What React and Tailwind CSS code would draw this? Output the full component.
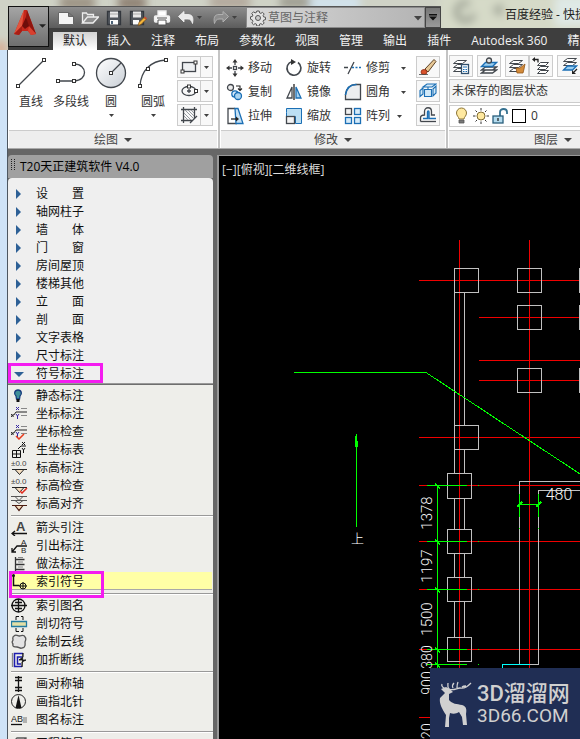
import React from "react";

/* ---------- small shared pieces ---------- */

function Icon({ w = 18, h = 18, children, className = "" }) {
  return (
    <svg
      width={w}
      height={h}
      viewBox={`0 0 ${w} ${h}`}
      fill="none"
      stroke="#42474d"
      strokeWidth="1.3"
      className={`shrink-0 ${className}`}
      aria-hidden="true"
    >
      {children}
    </svg>
  );
}

function Caret({ className = "text-[#404040]" }) {
  return (
    <svg width="5" height="3" viewBox="0 0 5 3" className={`shrink-0 ${className}`} aria-hidden="true">
      <path d="M0 0h5L2.500 3z" fill="currentColor" />
    </svg>
  );
}

function Node({ x, y }) {
  return <rect x={x - 1.5} y={y - 1.5} width="3" height="3" fill="#fff" stroke="#333" strokeWidth="1" />;
}

/* ---------- quick access bar ---------- */

const quick = [
  {
    label: "新建",
    art: <path d="M1.500 3.500h10l5 4v8h-15z M11.500 3.500v4h5" fill="#f4f4f4" stroke="#666" strokeWidth="1" />,
  },
  {
    label: "打开",
    art: (
      <>
        <path d="M1.500 14V4h4l1 1.500h6V8" stroke="#eee" fill="#8b8b8b" />
        <path d="M1.500 14l5-6h11L12 14z" fill="#8f8f8f" stroke="#eee" />
      </>
    ),
  },
  {
    label: "保存",
    art: (
      <>
        <path d="M2.500 2.500h13v13h-13z" fill="#50555c" stroke="#33373d" />
        <path d="M5 2.500h8v6H5z" fill="#e8e8e8" stroke="none" />
        <path d="M5 5h8" stroke="#aaa" strokeWidth="1" />
        <path d="M5 11h8v4.500H5z" fill="#fafafa" stroke="none" />
        <path d="M6 12h2v3H6z" fill="#4a6278" stroke="none" />
      </>
    ),
  },
  {
    label: "另存为",
    art: (
      <>
        <path d="M1.500 2.500h13v13h-13z" fill="#50555c" stroke="#33373d" />
        <path d="M4 2.500h8v6H4z" fill="#e8e8e8" stroke="none" />
        <path d="M4 5h8" stroke="#aaa" strokeWidth="1" />
        <path d="M4 11h6v4.500H4z" fill="#fafafa" stroke="none" />
        <path d="M9 16.500l1-3 5-5 2 2-5 5z" fill="#f2b43c" stroke="#7a4a14" strokeWidth=".7" />
        <path d="M15 8.500l2 2 1-1-2-2z" fill="#d8472c" stroke="none" />
      </>
    ),
  },
  {
    label: "打印",
    art: (
      <>
        <path d="M5 7V2h8v5" fill="#fff" stroke="#eee" />
        <rect x="1.500" y="7" width="15" height="6" rx="1" fill="#f6f6f6" stroke="#eee" />
        <path d="M5 11h8v5H5z" fill="#fff" stroke="#555" strokeWidth="1" />
        <path d="M4 9h10" stroke="#777" />
      </>
    ),
  },
  {
    label: "放弃",
    caret: true,
    art: <path d="M1.500 7.500L7 2.500V5.500h4c5 0 5.500 4 4.500 9-.8-2.500-2-4.500-4.500-4.500H7v3z" fill="#e9e9e9" stroke="#f5f5f5" strokeWidth=".8" />,
  },
  {
    label: "重做",
    caret: true,
    art: <path d="M16.500 7.500L11 2.500V5.500H7c-5 0-5.500 4-4.500 9 .8-2.500 2-4.500 4.500-4.500h4v3z" fill="#8d8d8d" stroke="#b0b0b0" strokeWidth="1" />,
  },
];

function QuickBar() {
  return (
    <div className="flex h-[22px] w-[392px] shrink-0 items-stretch border-t border-[#555] bg-gradient-to-b from-[#8d8d8d] to-[#5c5c5c]">
      <div className="flex w-[197px] items-center pl-2">
        {quick.map((q) => (
          <button key={q.label} type="button" aria-label={q.label} className="flex w-6 items-center last:ml-[11px]">
            <Icon w={18} h={18}>{q.art}</Icon>
            {q.caret && <Caret className="ml-[2px] text-[#404040]" />}
          </button>
        ))}
      </div>
      <label className="relative flex flex-1 items-center border border-[#8a8a8a] bg-gradient-to-r from-[#d8d8d8] to-[#b4b4b4]">
        <svg width="16" height="16" viewBox="0 0 16 16" className="ml-[3px] shrink-0" fill="none" stroke="#555" aria-hidden="true">
          <path
            d="M6.800 1h2.400l.4 1.900 1.300.5 1.600-1.100 1.700 1.700-1.100 1.600.5 1.300 1.900.4v2.400l-1.900.4-.5 1.300 1.100 1.600-1.700 1.700-1.600-1.100-1.300.5-.4 1.900H6.800l-.4-1.900-1.300-.5-1.600 1.100-1.700-1.700 1.100-1.600-.5-1.300L.5 9.200V6.800l1.900-.4.500-1.300L1.800 3.500l1.700-1.700 1.600 1.100 1.300-.5z"
            fill="#e4e4e4"
          />
          <circle cx="8" cy="8" r="2.500" fill="#ccc" />
        </svg>
        <select aria-label="工作空间" className="h-full flex-1 appearance-none bg-transparent pl-[2px] pt-px text-xs text-[#666] outline-none">
          <option>草图与注释</option>
        </select>
        <svg width="8" height="5" viewBox="0 0 8 5" className="absolute right-[2px] top-[8px]" aria-hidden="true">
          <path d="M0 0h8L4 4.500z" fill="#444" />
        </svg>
      </label>
      <button type="button" aria-label="自定义快速访问工具栏" className="flex w-4 items-center justify-center border border-[#444] bg-gradient-to-b from-[#777] to-[#9a9a9a]">
        <svg width="8" height="7" viewBox="0 0 8 7" aria-hidden="true">
          <path d="M0 0h8v1.500H0zM0 2.500h8L4 6.500z" fill="#111" />
        </svg>
      </button>
    </div>
  );
}

function Glass() {
  return (
    <svg className="absolute inset-0 h-full w-full" aria-hidden="true">
      <defs>
        <filter id="soft" x="-30%" y="-50%" width="160%" height="200%">
          <feGaussianBlur stdDeviation="4" />
        </filter>
      </defs>
      <rect width="100%" height="100%" fill="#cfd2c6" />
      <g filter="url(#soft)">
        <rect x="60" y="-4" width="35" height="14" fill="#9c9384" />
        <rect x="118" y="-4" width="28" height="14" fill="#8f8173" />
        <rect x="210" y="-4" width="40" height="12" fill="#b1a69a" />
        <rect x="280" y="-4" width="40" height="12" fill="#9d9b90" />
        <rect x="310" y="-4" width="50" height="14" fill="#d2e3ee" />
        <rect x="440" y="-8" width="160" height="44" fill="#d6dac8" />
        <path d="M470 4a9 9 0 1 0 4 10" fill="none" stroke="#8f9488" strokeWidth="5" />
        <path d="M492 10l10-7v14z" fill="#8f9488" />
        <rect x="555" y="-4" width="40" height="30" fill="#dfe9e6" />
        <rect x="-4" y="42" width="10" height="14" fill="#d9a88e" />
      </g>
    </svg>
  );
}

/* ---------- ribbon ---------- */

const tabs = ["默认", "插入", "注释", "布局", "参数化", "视图", "管理", "输出", "插件", "Autodesk 360", "精选应用"];

function Tabs() {
  return (
    <div role="tablist" className="flex h-[22px] items-end overflow-hidden bg-[#3e3e3e] pl-1">
      {tabs.map((t, i) => (
        <button
          key={t}
          type="button"
          role="tab"
          aria-selected={i === 0}
          className={
            i === 0
              ? "h-[18px] shrink-0 bg-gradient-to-b from-[#d2d2d2] to-white px-[10px] text-xs leading-[18px] text-[#222]"
              : "h-[18px] shrink-0 px-[10px] text-xs leading-[18px] text-[#f2f2f2]"
          }
        >
          {t}
        </button>
      ))}
    </div>
  );
}

function Panel({ title, width, children, last }) {
  return (
    <section className={`flex shrink-0 flex-col ${width} ${last ? "" : "border-r-2 border-[#c4c4c4]"}`}>
      <div className="h-[80px]">{children}</div>
      <button type="button" className="mx-px flex h-[18px] items-center justify-center gap-[6px] border-t border-[#ccc] bg-[#eee] pt-px text-xs text-[#444]">
        {title}
        <svg width="8" height="4" viewBox="0 0 8 4" aria-hidden="true">
          <path d="M0 0h8L4 4z" fill="#444" />
        </svg>
      </button>
    </section>
  );
}

const bigTools = [
  {
    label: "直线",
    width: "w-10",
    art: (
      <>
        <path d="M3 29L29 3" />
        <Node x={3} y={29} />
        <Node x={29} y={3} />
      </>
    ),
  },
  {
    label: "多段线",
    width: "w-10",
    art: (
      <>
        <path d="M3 24h16c14 0 14-17 0-17" />
        <Node x={3} y={24} />
        <Node x={19} y={24} />
        <Node x={19} y={7} />
      </>
    ),
  },
  {
    label: "圆",
    width: "w-10",
    caret: true,
    art: (
      <>
        <circle cx="16" cy="16" r="14.500" fill="url(#disc)" />
        <path d="M16 16L26 6" />
        <Node x={16} y={16} />
      </>
    ),
  },
  {
    label: "圆弧",
    width: "w-[44px]",
    caret: true,
    art: (
      <>
        <path d="M3 29C4 14 13 4 29 3" />
        <Node x={3} y={29} />
        <Node x={11} y={12} />
        <Node x={29} y={3} />
      </>
    ),
  },
];

const drawSplits = [
  {
    label: "矩形",
    art: (
      <>
        <rect x="2.500" y="4.500" width="13" height="9" fill="#eef0f2" />
        <Node x={2.5} y={13.5} />
        <Node x={15.5} y={4.5} />
      </>
    ),
  },
  {
    label: "椭圆",
    art: (
      <>
        <ellipse cx="9" cy="9" rx="7" ry="4.500" />
        <path d="M7 9h4M9 7v4" />
        <Node x={16} y={9} />
        <Node x={9} y={4.5} />
      </>
    ),
  },
  {
    label: "图案填充",
    art: (
      <>
        <path d="M1 3.500h16M1 14.500h11M3.500 1v16M14.500 1v11M17 10l-7 7" />
        <path d="M4 7l7 7M4 10l4 4M5 4l9 9M8 4l6 6M11 4l3 3" stroke="#8a9096" strokeWidth=".9" />
      </>
    ),
  },
];

function DrawPanel() {
  return (
    <Panel title="绘图" width="w-[212px]">
      <div className="flex h-full pl-[3px]">
        {bigTools.map((t) => (
          <button key={t.label} type="button" className={`flex flex-col items-center pt-[7px] text-xs text-[#333] ${t.width}`}>
            <Icon w={32} h={32}>
              <defs>
                <linearGradient id="disc" x1="0" y1="0" x2="1" y2="1">
                  <stop offset="0" stopColor="#fff" />
                  <stop offset="1" stopColor="#c9cfd6" />
                </linearGradient>
              </defs>
              {t.art}
            </Icon>
            <span className="mt-[5px] whitespace-nowrap">{t.label}</span>
            {t.caret && <Caret className="mt-1 text-[#404040]" />}
          </button>
        ))}
        <div className="ml-[2px] flex flex-col gap-[2px] pt-[6px]">
          {drawSplits.map((s) => (
            <button key={s.label} type="button" aria-label={s.label} className="flex h-[22px] w-9 items-center border border-[#ccc] bg-[#f8f8f8]">
              <span className="flex h-full w-[23px] items-center justify-center border-r border-[#ccc]">
                <Icon>{s.art}</Icon>
              </span>
              <span className="flex flex-1 justify-center">
                <Caret />
              </span>
            </button>
          ))}
        </div>
      </div>
    </Panel>
  );
}

const blue = "#1b6fb5";

const modifyColumns = [
  {
    pad: "w-[59px]",
    items: [
      {
        label: "移动",
        art: (
          <>
            <path d="M9 2v4M9 12v4M2 9h4M12 9h4" />
            <path d="M9 0l2.500 3.500h-5zM9 18l2.500-3.500h-5zM0 9l3.500-2.500v5zM18 9l-3.500-2.500v5z" fill="#333" stroke="none" />
            <rect x="7.500" y="7.500" width="3" height="3" />
          </>
        ),
      },
      {
        label: "复制",
        art: (
          <>
            <circle cx="4.500" cy="4.500" r="3" fill="#eee" />
            <path d="M10 3h4v4M12 5.500l2 2 2-2" stroke="#222" strokeWidth="1.100" />
            <circle cx="9" cy="11" r="3.200" fill="#d6eafa" stroke={blue} />
            <circle cx="12" cy="13" r="3.500" fill="#aad5f2" stroke={blue} />
          </>
        ),
      },
      {
        label: "拉伸",
        art: (
          <>
            <path d="M9 1.500H2v15h9" />
            <path d="M9 1.500l3 0 5 15H10z" fill="#c4e0f4" stroke={blue} />
            <path d="M5 12h6" stroke="#222" />
            <path d="M10 9.500l3 2.500-3 2.500z" fill="#222" stroke="none" />
          </>
        ),
      },
    ],
  },
  {
    pad: "w-[59px]",
    items: [
      {
        label: "旋转",
        art: (
          <>
            <path d="M7 2.500a7 7 0 1 0 6 1" strokeWidth="1.600" />
            <path d="M6 0l5 3-5 3z" fill="#333" stroke="none" />
          </>
        ),
      },
      {
        label: "镜像",
        art: (
          <>
            <path d="M7 4v11H2z" fill="#fff" />
            <path d="M11 4v11h5z" fill="#a6d1ef" stroke={blue} />
            <path d="M9 1v16" stroke="#222" />
          </>
        ),
      },
      {
        label: "缩放",
        art: (
          <>
            <path d="M1.500 5.500v-4h15v15h-6v-7h-9z" fill="#bcdff3" stroke={blue} strokeWidth="1" />
            <rect x="1.500" y="9.500" width="8" height="7" fill="#f3f3f3" />
          </>
        ),
      },
    ],
  },
  {
    pad: "w-[72px]",
    items: [
      {
        label: "修剪",
        caret: "ml-[11px] text-[#404040]",
        art: (
          <>
            <path d="M0 8.500h4M10 3L4 15" />
            <path d="M8 8.500h9" stroke={blue} strokeDasharray="2 1.500" />
          </>
        ),
      },
      {
        label: "圆角",
        caret: "ml-[11px] text-[#404040]",
        art: (
          <>
            <path d="M1.500 16.500V11c1-6 5-9.500 10-9.500h5v15z" fill="#eceef0" />
            <path d="M1.500 12c1-7 5-10.500 11-10.500" stroke={blue} strokeWidth="1.600" />
          </>
        ),
      },
      {
        label: "阵列",
        caret: "ml-[7px] text-[#404040]",
        art: (
          <>
            <rect x="1.500" y="1.500" width="6" height="6" fill="#f1f1f1" />
            <g fill="#d6ebf9" stroke={blue}>
              <rect x="10.500" y="1.500" width="6" height="6" />
              <rect x="1.500" y="10.500" width="6" height="6" />
              <rect x="10.500" y="10.500" width="6" height="6" />
            </g>
          </>
        ),
      },
    ],
  },
];

const modifyButtons = [
  {
    label: "删除",
    art: (
      <>
        <path d="M6 11L15 1.500l2 2L9 14z" fill="#e7c795" stroke="#5d4326" strokeWidth="1" />
        <ellipse cx="5" cy="14" rx="3" ry="2.500" fill="#d9532c" stroke="#8c2c14" strokeWidth=".8" />
        <path d="M0 16.500h9" stroke="#444" strokeWidth=".8" />
      </>
    ),
  },
  {
    label: "分解",
    art: (
      <g stroke={blue} fill="#d2e9f8" strokeWidth="1.100">
        <path d="M4 5l4-3h9l-4 3zM14 7l3-3v7l-3 3z" />
        <path d="M5.500 7.500h7v7h-7z" />
        <path d="M4 6L1 8.500v6L4 12z" />
        <path d="M9 5v2.500" />
      </g>
    ),
  },
  {
    label: "偏移",
    art: (
      <>
        <path d="M1.500 15.500V12c0-2 1-3 4-3V5.500c0-5 7-5 7 0V9H16" />
        <path d="M1.500 15.500H17" />
        <path d="M4 12.500h4.500V6c0-1.500 1.500-1.500 1.500 0v6.500H17" stroke={blue} strokeWidth="1.400" />
      </>
    ),
  },
];

function ModifyPanel() {
  return (
    <Panel title="修改" width="w-[228px]">
      <div className="flex h-full pl-[6px] pt-[6px]">
        {modifyColumns.map((c, i) => (
          <div key={i} className={`flex flex-col gap-[2px] ${c.pad}`}>
            {c.items.map((it) => (
              <button key={it.label} type="button" className="flex h-[22px] items-center whitespace-nowrap pt-[2px] text-xs text-[#333]">
                <Icon>{it.art}</Icon>
                <span className="ml-1">{it.label}</span>
                {it.caret && <Caret className={it.caret} />}
              </button>
            ))}
          </div>
        ))}
        <div className="flex flex-col gap-[2px]">
          {modifyButtons.map((b) => (
            <button key={b.label} type="button" aria-label={b.label} className="flex h-[22px] w-6 items-center justify-center border border-[#ccc] bg-[#f8f8f8]">
              <Icon>{b.art}</Icon>
            </button>
          ))}
        </div>
      </div>
    </Panel>
  );
}

function Sheets() {
  return (
    <g strokeWidth="1" fill="#fff">
      <path d="M1.500 14.500l4-3h9l-4 3z" />
      <path d="M1.500 10.500l4-3h9l-4 3z" />
      <path d="M1.500 6.500l4-3h9l-4 3z" />
    </g>
  );
}

const layerButtons = [
  {
    label: "图层特性",
    gap: "mr-1",
    art: (
      <>
        <Sheets />
        <rect x="9.500" y="7.500" width="7" height="9" fill="#fff" stroke="#31506e" />
        <path d="M11 10h4M11 12.500h1.500M13.500 12.500H15M11 14.500h1.500M13.500 14.500H15" stroke={blue} strokeWidth="1" />
      </>
    ),
  },
  {
    label: "置为当前",
    gap: "mr-1",
    art: (
      <>
        <path d="M1.500 16l4-3h11l-4 3zM1.500 13l4-3h11l-4 3z" fill="#fff" />
        <path d="M1.500 9.500l4-4h11l-4 4z" fill="#9ccff0" stroke={blue} />
        <circle cx="9" cy="3.500" r="2.500" fill="#e6e6e6" />
      </>
    ),
  },
  {
    label: "匹配图层",
    gap: "",
    art: (
      <>
        <Sheets />
        <path d="M17 7l-5 4-4 0 1 5 6 0 1-4z" fill="#d38b3a" stroke="#915417" strokeWidth=".8" />
      </>
    ),
  },
  {
    label: "上一个",
    gap: "mr-1",
    art: (
      <>
        <g fill="#fff" strokeWidth="1">
          <path d="M5.500 16.500l3-3h8l-3 3zM5.500 12.500l3-3h8l-3 3zM5.500 8.500l3-3h8l-3 3z" />
        </g>
        <path d="M2 2.500h4v3" stroke="#222" />
        <path d="M0 2.500L3 0v5z" fill="#222" stroke="none" />
      </>
    ),
  },
  {
    label: "隔离",
    gap: "",
    art: (
      <>
        <path d="M3.500 8.500l4-3h9l-4 3zM3.500 4.500l4-3h9l-4 3z" fill="#fff" strokeWidth="1" />
        <path d="M3.500 13l4-4h9l-4 4z" fill="#9ccff0" stroke={blue} />
        <path d="M17 12l-3 3" stroke="#222" />
        <path d="M12 17v-4l4 4z" fill="#222" stroke="none" />
      </>
    ),
  },
];

function LayerPanel() {
  return (
    <Panel title="图层" width="w-[210px]" last>
      <div className="flex h-full flex-col gap-[2px] pl-px pt-[5px]">
        <div className="flex">
          {layerButtons.map((b) => (
            <button key={b.label} type="button" aria-label={b.label} className={`flex h-[22px] w-6 items-center justify-center border border-[#ccc] bg-[#f8f8f8] ${b.gap}`}>
              <Icon>{b.art}</Icon>
            </button>
          ))}
        </div>
        <select aria-label="图层状态" className="h-6 shrink-0 appearance-none border border-[#ccc] bg-[#f4f4f4] pl-[2px] text-xs text-[#333] outline-none">
          <option>未保存的图层状态</option>
        </select>
        <div className="flex h-[22px] shrink-0 items-center border border-[#ccc] bg-white pl-[3px]">
          <Icon w={18} h={18}>
            <path d="M6 12c0-2-2.500-3-2.500-6a5 5 0 0 1 10 0c0 3-2.500 4-2.500 6z" fill="#ffe9a0" stroke="#8b7436" strokeWidth="1" />
            <path d="M6 13h5v3H6z" fill="#777" stroke="#555" strokeWidth=".8" />
          </Icon>
          <Icon w={20} h={18}>
            <circle cx="10" cy="9" r="4" fill="#ffe9a0" stroke="#7f6b33" strokeWidth="1" />
            <path d="M10 1v2.500M10 14.500V17M2 9h2.500M15.500 9H18M4.500 3.500l1.500 1.500M14 13l1.500 1.500M15.500 3.500L14 5M6 13l-1.500 1.500" stroke="#333" strokeWidth="1" />
          </Icon>
          <Icon w={18} h={18}>
            <path d="M9 9V5c0-4 7-4 7 0v2" stroke="#34708f" strokeWidth="1.800" />
            <rect x="2" y="9" width="10" height="7" fill="#b5dcef" stroke="#295e7c" />
            <path d="M7 11v3" stroke="#222" />
          </Icon>
          <span className="ml-[3px] h-[14px] w-[14px] border border-black bg-white" />
          <span className="ml-[5px] text-xs text-[#333]">0</span>
        </div>
      </div>
    </Panel>
  );
}

/* ---------- side menu ---------- */

const groups = ["设　　置", "轴网柱子", "墙　　体", "门　　窗", "房间屋顶", "楼梯其他", "立　　面", "剖　　面", "文字表格", "尺寸标注"];

const iconFont = { fontFamily: "Liberation Sans, sans-serif" };

function Level({ check }) {
  return (
    <>
      <text x="0" y="6" fontSize="8" fill="#444" stroke="none" style={iconFont}>±0.0</text>
      <path d="M1 9.500h15M4 9.500l4.500 5 4.500-5" fill="#f6dfc0" stroke="#222" strokeWidth="1" />
      {check && <path d="M9 13l2 2 5-5" stroke="#e02b1c" strokeWidth="1.500" />}
    </>
  );
}

function Coord({ check }) {
  return (
    <>
      <path d="M5 1l3 3M8 1L5 4M5 8l1.500 2L8 8M6.500 10v3" stroke="#3326a0" strokeWidth="1" />
      <path d="M0 8l2.500 3M2.500 8L0 11M2.500 9.500l2.500-3.500h11" stroke="#222" strokeWidth="1" />
      <path d="M10 2.500h6M10 9.500h6" stroke="#888" strokeWidth="1" />
      {check && <path d="M5 12l3 3 5-5" stroke="#ea3a1a" strokeWidth="1.500" />}
    </>
  );
}

const sections = [
  [
    {
      label: "静态标注",
      art: (
        <>
          <path d="M5 8C2.500 6 3.500 2 7 2s4.500 4 2 6l-.5 3h-3z" fill="#3f8f98" stroke="#163a7c" />
          <path d="M5.500 11h3v3h-3z" fill="#111" stroke="none" />
        </>
      ),
    },
    { label: "坐标标注", art: <Coord /> },
    { label: "坐标检查", art: <Coord check /> },
    {
      label: "生坐标表",
      art: (
        <>
          <path d="M1.500 8.500h8v7h-8zM5.500 8.500v7M1.500 12h8M7 7l3-3h5" stroke="#111" strokeWidth="1" />
          <path d="M11 0l3 3M14 0l-3 3M11 6l1.500 2L14 6M12.500 8v3" stroke="#111" strokeWidth="1" />
        </>
      ),
    },
    { label: "标高标注", art: <Level /> },
    { label: "标高检查", art: <Level check /> },
    {
      label: "标高对齐",
      art: (
        <>
          <path d="M0 .5h16M0 4.500h16M4 .5l4 4 4-4M4 4.500l4 3 4-3" stroke="#555" strokeWidth="1" />
          <path d="M1 9.500h15M4 9.500l4 5 4-5" fill="#f6dfc0" stroke="#4a1c10" strokeWidth="1.200" />
        </>
      ),
    },
  ],
  [
    {
      label: "箭头引注",
      art: (
        <>
          <text x="5" y="11" fontSize="13" fontWeight="bold" fill="#444" stroke="none" style={iconFont}>A</text>
          <path d="M1 13.500h15M4 11l-3 2.500L4 16" stroke="#111" />
        </>
      ),
    },
    {
      label: "引出标注",
      art: (
        <>
          <path d="M1 14l5-6h10M1 10v4h4" stroke="#111" />
          <text x="10" y="7" fontSize="8" fill="#222" stroke="none" style={iconFont}>A</text>
          <text x="10" y="15" fontSize="8" fill="#222" stroke="none" style={iconFont}>B</text>
        </>
      ),
    },
    {
      label: "做法标注",
      art: (
        <>
          <path d="M4.500 1v15M4.500 3.500h9M4.500 8.500h9M4.500 13.500h9" stroke="#333" />
          <path d="M7 1.500h5M7 6h5M7 11h5" stroke="#888" strokeWidth="1" />
        </>
      ),
    },
    {
      label: "索引符号",
      active: true,
      art: (
        <>
          <path d="M2.500 1v10.500h6" stroke="#111" strokeWidth="1.500" />
          <circle cx="2.500" cy="1.500" r="1.500" fill="#111" stroke="none" />
          <circle cx="12" cy="12" r="3" stroke="#111" strokeWidth="1" />
          <path d="M8 12h8M12 8v7" stroke="#111" strokeWidth="1" />
        </>
      ),
    },
  ],
  [
    {
      label: "索引图名",
      art: (
        <>
          <circle cx="7.500" cy="7.500" r="6.500" stroke="#111" />
          <path d="M0 7.500h16M7.500 1v13M4 4.500h7M4 10.500h7" stroke="#111" />
        </>
      ),
    },
    {
      label: "剖切符号",
      art: (
        <>
          <path d="M5 4V.5h3M10 .5h2V4M5 12v3.500h3M10 15.500h2V12" stroke="#111" strokeWidth="1" />
          <path d="M.5 5.500h15v5H.5z" fill="#e3dfa6" stroke="#227aa1" />
        </>
      ),
    },
    {
      label: "绘制云线",
      art: (
        <path d="M3 2c2-2 4 0 5 0s5-2 6 1c2 2 0 4 0 5s1 6-3 6c-2 1-3-1-5-1s-5 0-4-3c-2-2 0-3 0-4S1 3 3 2z" fill="#e3e3e3" stroke="#555" />
      ),
    },
    {
      label: "加折断线",
      art: (
        <>
          <path d="M1.500 1v14" stroke="#888" />
          <path d="M12 1.500H3.500v13H11M11 5H6.500v7H10" stroke="#1c1cae" strokeWidth="1.500" />
          <path d="M12 1v4l-4 3h7l-4 2v5z" fill="#111" stroke="#111" strokeWidth=".8" />
        </>
      ),
    },
  ],
  [
    {
      label: "画对称轴",
      art: <path d="M7.500 0v16M4 1.500h7M4 4.500h7M4 11.500h7M4 14.500h7" stroke="#111" />,
    },
    {
      label: "画指北针",
      art: (
        <>
          <circle cx="7.500" cy="7.500" r="7" stroke="#222" strokeWidth="1" />
          <path d="M7.500 1l3 13h-6z" fill="#111" stroke="none" />
        </>
      ),
    },
    {
      label: "图名标注",
      art: (
        <>
          <text x="0" y="10" fontSize="9" fill="#111" stroke="none" style={iconFont}>AB</text>
          <path d="M0 12.500h11" stroke="#111" />
          <path d="M12 6h4M12 8h4M12 10h4" stroke="#555" strokeWidth=".8" />
        </>
      ),
    },
  ],
  [
    {
      label: "工程符号",
      art: <path d="M3 5l3-3h9v11l-3 3M3 5h9v11H3zM12 5l3-3" fill="#fff" stroke="#555" />,
    },
  ],
];

function SideMenu() {
  return (
    <aside className="flex w-[205px] shrink-0 flex-col overflow-hidden">
      <h2 className="flex h-[23px] shrink-0 items-center gap-[5px] rounded-t bg-[#a0a0a0] pl-[3px] pt-px text-xs font-normal text-black">
        <svg width="4" height="12" viewBox="0 0 4 12" className="mb-[5px]" aria-hidden="true">
          <path d="M.5 0v12M3.500 0v12" stroke="#222" strokeDasharray="1 1" />
        </svg>
        T20天正建筑软件 V4.0
      </h2>
      <div className="flex flex-1 flex-col overflow-hidden rounded-t bg-[#efefef] pt-[6px] text-xs text-[#111]">
        {groups.map((g) => (
          <button key={g} type="button" className="flex h-[18px] shrink-0 items-center pl-2 pt-[2px] text-left">
            <svg width="5" height="10" viewBox="0 0 5 10" className="mr-[15px]" aria-hidden="true">
              <path d="M0 0l5 5-5 5z" fill="#2d6096" />
            </svg>
            {g}
          </button>
        ))}
        <button type="button" aria-expanded="true" className="relative flex h-[18px] shrink-0 items-center pl-[6px] pt-[2px] text-left">
          <svg width="10" height="5" viewBox="0 0 10 5" className="mr-3" aria-hidden="true">
            <path d="M0 0h10L5 5z" fill="#2d6096" />
          </svg>
          符号标注
          <span className="absolute -top-px left-0 h-5 w-[95px] border-[3px] border-[#f41cf0]" />
        </button>
        <div className="mt-px h-[2px] shrink-0 border-t border-[#999] bg-[#6e6e6e]" />
        <div className="flex flex-1 flex-col bg-[#eeeeea] pt-px">
          {sections.map((rows, i) => (
            <div key={i} className="flex shrink-0 flex-col">
              {i > 0 && <div className="mb-[1px] ml-[3px] mt-[3px] h-[2px] border-b border-t border-b-white border-t-[#999]" />}
              {rows.map((r) => (
                <button
                  key={r.label}
                  type="button"
                  className={
                    r.active
                      ? "relative ml-[3px] mr-px flex h-[18px] items-center border-b border-[#a8a8a8] bg-[#ffffa6] pt-[2px] text-left"
                      : "ml-[3px] flex h-[18px] items-center pt-[2px] text-left"
                  }
                >
                  <Icon w={17} h={16} className="mr-2">{r.art}</Icon>
                  {r.label}
                  {r.active && <span className="absolute -left-[2px] -top-px h-[27px] w-[95px] border-[3px] border-[#f41cf0]" />}
                </button>
              ))}
            </div>
          ))}
        </div>
      </div>
    </aside>
  );
}

/* ---------- drawing canvas ---------- */

const gridRows = [
  [280.5, 419],
  [317.5, 479],
  [360.5, 479],
  [380.5, 479],
  [437.5, 419],
  [485.5, 419],
  [541.5, 419],
  [589.5, 419],
  [649.5, 419],
  [717.5, 419],
];

const columns = [
  [454.5, 268.5, 24],
  [517.5, 268.5, 24],
  [517.5, 305.5, 24],
  [517.5, 368.5, 24],
  [579.5, 268.5, 24],
  [579.5, 305.5, 24],
  [579.5, 368.5, 24],
  [454.5, 425.5, 24],
  [447.5, 473.5, 25],
  [447.5, 529.5, 24],
  [447.5, 577.5, 24],
  [447.5, 637.5, 24],
];

const dimTicks = [485.5, 541.5, 589.5, 649.5, 664.5];

const dimTexts = [
  ["1378", 513],
  ["1197", 566],
  ["1500", 619],
  ["380", 657],
  ["900", 683],
  ["720", 735],
];

function Canvas() {
  return (
    <main className="relative min-w-0 flex-1 overflow-hidden border-l-2 border-t border-[#999] bg-black">
      <svg width="720" height="1000" viewBox="219 156 720 1000" className="block" fill="none" shapeRendering="crispEdges" aria-label="绘图区">
        <g stroke="#f00000">
          <path d="M459.500 240V900M529.500 240V900" />
          {gridRows.map(([y, x]) => (
            <path key={y} d={`M${x} ${y}H930`} />
          ))}
        </g>
        <g stroke="#c0c0c0">
          {columns.map(([x, y, h]) => (
            <rect key={`${x}-${y}`} x={x} y={y} width="24" height={h} />
          ))}
          <path d="M454.500 292V474M464.500 292V426M464.500 449V474M454.500 498V530M464.500 498V530M454.500 553V578M464.500 553V578M454.500 601V638M464.500 601V638" />
          <path d="M930 481.500H519.500V664M930 490.500H538.500V664.500H529" />
        </g>
        <path d="M530 664.500H502.500V700" stroke="#00ffff" />
        <g stroke="#00ff00">
          <path d="M294 372.500H426L640 513.500" />
          <path d="M356.500 434V527" />
          <path d="M356 434l2 9v4h-3v-9z" fill="#00ff00" stroke="none" />
          <path d="M437.500 485V740" />
          {dimTicks.map((y) => (
            <g key={y}>
              <path d={`M427 ${y}H467M478 ${y}h1`} />
              <path d={`M435 ${y - 2}l5 5`} strokeWidth="2" />
            </g>
          ))}
          <path d="M519 504.500H539M519.500 494V517M538.500 494V517M519.500 528v1M538.500 528v1" />
          <path d="M517 507l5-5M536 507l5-5" strokeWidth="2" />
        </g>
        <g
          fill="#f4f4f4"
          fontSize="16"
          fontWeight="300"
          textAnchor="middle"
          style={{ fontFamily: "'Liberation Sans Narrow', Roboto, sans-serif" }}
        >
          {dimTexts.map(([t, y]) => (
            <text key={t} fontSize={t.length === 4 ? 15 : 14} transform={`translate(432 ${y}) rotate(-90)`}>{t}</text>
          ))}
          <text x="559" y="500">480</text>
        </g>
        <text x="351" y="543" fontSize="13" fontWeight="300" fill="#fff" style={{ fontFamily: "'Noto Sans CJK SC', sans-serif" }}>上</text>
      </svg>
      <p className="absolute left-[3px] top-[6px] text-xs text-[#ddd]">[−][俯视][二维线框]</p>
      <Watermark />
    </main>
  );
}

function Watermark() {
  return (
    <div className="absolute bottom-0 right-0 flex h-[71px] w-[150px] items-center gap-[2px] bg-[#202e54] pl-[9px] text-[#d0d0d0]">
      <svg width="36" height="46" viewBox="0 0 36 46" className="shrink-0" fill="currentColor" aria-hidden="true">
        <path d="M2 8l5-2 4 2 3 3-4 2v6c3 4 8 4 13 5 4 1 5 4 4 9l1 11h-4l-1-8-3-5c-3 2-6 2-9 1l-1 5v9H6l1-12C3 28 0 22 1 17l5-5z" />
        <path d="M7 8C4 7 2 5 3 3M10 8C8 5 9 4 9 2M10 8c4 2 8-1 11-1 5 1 8-2 11-5M14 7c-1-2 0-4 1-5M18 7c0-3 0-4 1-6M23 6c1-1 3-1 4-1" fill="none" stroke="currentColor" strokeWidth="1.300" />
      </svg>
      <div className="flex flex-col whitespace-nowrap font-['Roboto','Noto_Sans_CJK_SC',sans-serif]">
        <span className="text-[22px] font-medium leading-6">3D溜溜网</span>
        <span className="text-[19px] leading-5">3D66.COM</span>
      </div>
    </div>
  );
}

/* ---------- window ---------- */

export default function App() {
  return (
    <div className="flex h-screen flex-col overflow-hidden bg-[#cfe3f7] font-['Open_Sans','Noto_Sans_CJK_SC',sans-serif]">
      <header className="relative flex shrink-0 pl-2">
        <Glass />
        <div className="relative flex w-[41px] shrink-0 flex-col justify-between pt-[6px]">
          <button type="button" aria-label="应用程序菜单" className="flex h-[41px] items-start border border-[#111] bg-gradient-to-b from-[#a5a5a5] to-[#6f6f6f] pl-1 pt-[2px]">
            <svg width="24" height="28" viewBox="0 0 24 28" className="shrink-0" aria-hidden="true">
              <path d="M11 1L1 25l5 1 3-4h6l3 4 5-1L14 1z" fill="#c5281c" />
              <path d="M11 1L1 25l8-8z" fill="#e2553e" />
              <path d="M14 1l9 24-8-8-2-9z" fill="#8f150e" />
              <path d="M9 17l4-9 3 9-4 3z" fill="#6e0d0a" />
              <path d="M1 25l8-8v5l-3 4z" fill="#a81e15" />
              <path d="M23 25l-7-8-1 5 3 4z" fill="#d8402f" />
            </svg>
            <svg width="7" height="4" viewBox="0 0 8 4" className="ml-[2px] mt-[15px] shrink-0" aria-hidden="true">
              <path d="M0 0h8L4 4z" fill="#222" />
            </svg>
          </button>
          <div className="h-[3px] bg-[#3e3e3e]" />
        </div>
        <div className="relative flex min-w-0 flex-1 flex-col">
          <div className="flex h-7 items-end overflow-hidden">
            <QuickBar />
            <h1 className="ml-16 whitespace-nowrap pb-[5px] text-xs font-normal text-[#222]">百度经验 - 快捷命令</h1>
          </div>
          <Tabs />
        </div>
      </header>

      <div className="ml-[7px] flex min-h-0 flex-1 flex-col border-l border-[#4d5660] bg-[#666]">
        <div className="flex h-[99px] shrink-0 overflow-hidden border-b border-[#aaa] bg-white">
          <DrawPanel />
          <ModifyPanel />
          <LayerPanel />
        </div>
        <div className="flex min-h-0 flex-1 gap-1 pt-[6px]">
          <SideMenu />
          <Canvas />
        </div>
      </div>
    </div>
  );
}
